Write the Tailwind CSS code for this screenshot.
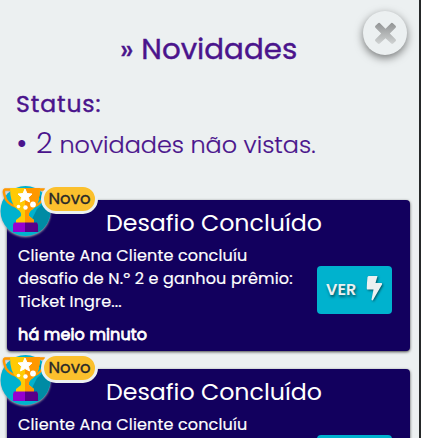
<!DOCTYPE html>
<html lang="pt-BR">
<head>
<meta charset="utf-8">
<title>Novidades</title>
<script src="https://cdn.jsdelivr.net/npm/@tailwindcss/browser@4"></script>
</head>
<body class="w-[421px] h-[438px] overflow-hidden bg-[#252829] font-[Poppins,Inter,sans-serif]">
<svg class="absolute w-0 h-0" aria-hidden="true">
  <defs>
    <linearGradient id="close" x1="0" y1="0" x2="0" y2="1"><stop offset="0" stop-color="#929495"/><stop offset="1" stop-color="#d0d3d3"/></linearGradient>
    <symbol id="trophy" viewBox="0 0 52 52">
      <circle cx="25.500" cy="26" r="25" fill="#00b2ce"/>
      <path d="M34 6L44 18 37 24 31 36 37 43 38 47.500A25 25 0 0 0 50.500 26Q50 19 46 14Z" fill="#008ba4"/>
      <path d="M12 4.500H5Q3 5 4.500 10Q6 19 17 22M38 4.500H44Q46 5 44.500 10Q42 19 33 22" fill="none" stroke="#ff9800" stroke-width="2.400"/>
      <path d="M10 3H40Q40 19 33 24Q28 27 29 31L34 35V39H16V35L21 31Q22 27 17 24Q10 19 10 3Z" fill="#ffca05"/>
      <path d="M25 3H40Q40 19 33 24Q28 27 29 31L34 35V39H25Z" fill="#ff9800"/>
      <path d="M25 4L27 8.500 32 9 28.500 12.300 29.500 17 25 14.500 20.500 17 21.500 12.300 18 9 23 8.500Z" fill="#fff" stroke="#fff"/>
      <circle cx="18.500" cy="21.500" r="1.800" fill="#fff"/><circle cx="25.500" cy="22.500" r="2.200" fill="#fff"/><circle cx="33" cy="19.500" r="2.900" fill="#fff"/>
      <path d="M14 37.500H25V47H13V40Z" fill="#9500d1"/><path d="M25 37.500H37L38 40V47H25Z" fill="#59008a"/>
    </symbol>
    <symbol id="bolt" viewBox="0 0 16 26"><path d="M2 1H11L9 8H15Q16 8 15.500 9.500L6.500 25Q5.500 26 5 24.500L7 14.500H1Q0 14.500 0 13L1 2Z" fill="#ecf0f1"/></symbol>
  </defs>
</svg>
<main class="relative w-[419px] h-[438px] overflow-hidden bg-[#ecf0f1] text-[#4a148c]">
  <button aria-label="Fechar" class="absolute left-[363px] top-[11px] w-11 h-11 rounded-full bg-[#ecf0f1] shadow-[0_3px_8px_rgba(0,0,0,.5)] flex items-center justify-center">
    <svg class="w-[23px] h-[23px]" viewBox="0 0 24 24"><path d="M6 1L12 7 18 1Q19 .5 20 1.500L22.500 4Q23.500 5 22.500 6L16.500 12 22.500 18Q23.500 19 22.500 20L20 22.500Q19 23.500 18 22.500L12 17 6 22.500Q5 23.500 4 22.500L1.500 20Q.5 19 1.500 18L7.500 12 1.500 6Q.5 5 1.500 4L4 1.500Q5 .5 6 1Z" fill="url(#close)"/></svg>
  </button>
  <h1 class="pt-[29px] pl-[120px] text-[29.300px] leading-10 [-webkit-text-stroke:0.4px] whitespace-nowrap">» Novidades</h1>
  <h2 class="mt-[19px] pl-4 text-[23.500px] leading-8 [-webkit-text-stroke:0.4px] tracking-[0.9px]">Status:</h2>
  <p class="mt-[3px] pl-4 flex items-baseline h-10 leading-10 whitespace-nowrap font-light"><span class="w-5 text-[28px] font-normal">•</span><span class="w-[23.5px] text-[29px]">2</span><span class="text-[23.900px] [-webkit-text-stroke:0.2px]">novidades não vistas.</span></p>
  <section class="mt-[37px] ml-[7px] flex flex-col gap-[18px] text-white">
    <article class="relative w-[403px] h-[151px] shrink-0 rounded-[4px] bg-[#12005e] shadow-[0_1px_3px_rgba(0,0,0,.7)] pl-[11px] pt-[7px]">
      <svg class="absolute -left-[7px] -top-[15px] w-[52px] h-[52px] rounded-full drop-shadow-[0_1px_1px_#aaa] overflow-visible"><use href="#trophy"/></svg>
      <span class="absolute left-[34px] -top-[16px] w-[57px] h-[30px] rounded-[15px] border-[3px] border-[#ecf0f1] bg-[#fbc02d] text-[#292929] text-[16.500px] leading-6 text-center [-webkit-text-stroke:0.35px]">Novo</span>
      <h3 class="pl-[88px] h-8 leading-8 text-[23.700px] whitespace-nowrap">Desafio Concluído</h3>
      <div class="flex">
        <div class="w-[299px] pt-[5px] text-[16px] leading-[23px] tracking-[0.150px] whitespace-nowrap [-webkit-text-stroke:0.2px]"><p>Cliente Ana Cliente concluíu</p><p>desafio de N.º 2 e ganhou prêmio:</p><p>Ticket Ingre...</p><p class="mt-[10px] tracking-[0.150px] [-webkit-text-stroke:0.8px]">há meio minuto</p></div>
        <button class="mt-[27px] w-[75px] h-12 rounded-[4px] bg-[#00b2ce] flex items-center pl-[9px] gap-[10px] text-[#ecf0f1] text-[16px] font-semibold [text-shadow:1px_2px_3px_#0008]"><span class="w-[30px]">VER</span><svg class="w-[17px] h-[26px] -mt-1 drop-shadow-[1px_1px_1px_#0008]" viewBox="0 0 16 26"><use href="#bolt"/></svg></button>
      </div>
    </article>
    <article class="relative w-[403px] h-[151px] shrink-0 rounded-[4px] bg-[#12005e] shadow-[0_1px_3px_rgba(0,0,0,.7)] pl-[11px] pt-[7px]">
      <svg class="absolute -left-[7px] -top-[15px] w-[52px] h-[52px] rounded-full drop-shadow-[0_1px_1px_#aaa] overflow-visible"><use href="#trophy"/></svg>
      <span class="absolute left-[34px] -top-[16px] w-[57px] h-[30px] rounded-[15px] border-[3px] border-[#ecf0f1] bg-[#fbc02d] text-[#292929] text-[16.500px] leading-6 text-center [-webkit-text-stroke:0.35px]">Novo</span>
      <h3 class="pl-[88px] h-8 leading-8 text-[23.700px] whitespace-nowrap">Desafio Concluído</h3>
      <div class="flex">
        <div class="w-[299px] pt-[5px] text-[16px] leading-[23px] tracking-[0.150px] whitespace-nowrap [-webkit-text-stroke:0.2px]"><p>Cliente Ana Cliente concluíu</p></div>
        <button class="mt-[27px] w-[75px] h-12 rounded-[4px] bg-[#00b2ce]" aria-label="Ver"></button>
      </div>
    </article>
  </section>
</main>
</body>
</html>
